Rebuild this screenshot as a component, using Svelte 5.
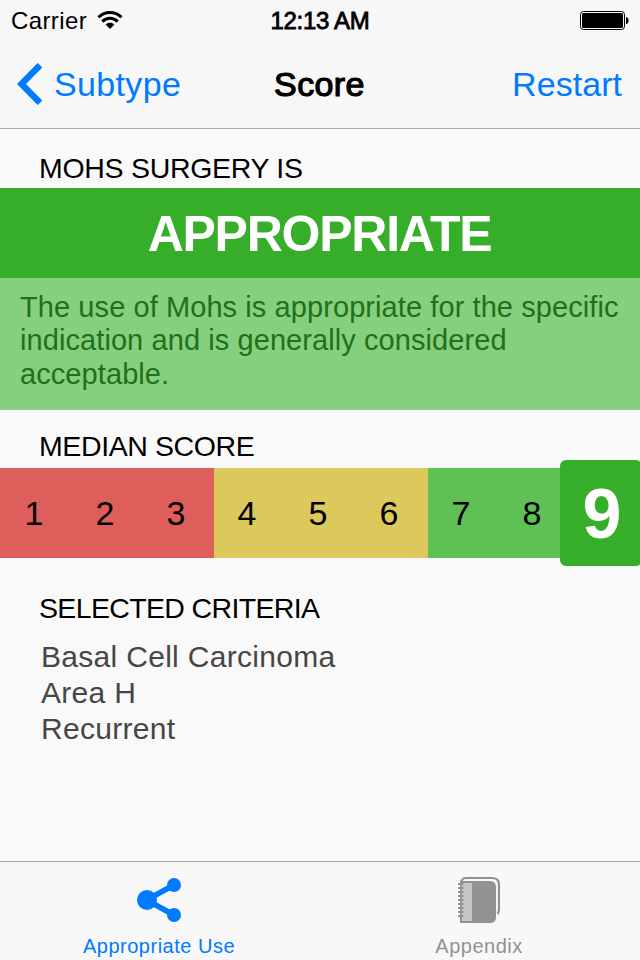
<script>
let verdict = 'APPROPRIATE';
let median = 9;

const bands = [
  { name: 'low', scores: [1, 2, 3] },
  { name: 'mid', scores: [4, 5, 6] },
  { name: 'high', scores: [7, 8, 9] },
];

const description = [
  'The use of Mohs is appropriate for the specific',
  'indication and is generally considered',
  'acceptable.',
];

const criteria = ['Basal Cell Carcinoma', 'Area H', 'Recurrent'];

// y positions of the notebook's spiral rings
const rings = [9, 13, 17, 21, 25, 29, 33, 37, 41];
</script>

<style>
  :global(body) {
    background: #f9f9f9;
  }

  .screen {
    display: flex;
    flex-direction: column;
    width: 640px;
    height: 960px;
    overflow: hidden;
    background: #f9f9f9;
    color: #000;
    font-family: "Liberation Sans", Arial, sans-serif;
    white-space: nowrap;
  }

  header {
    height: 128px;
    background: #f7f7f7;
    border-bottom: 1px solid #acacac;
  }

  .status {
    display: grid;
    grid-template-columns: 1fr auto 1fr;
    align-items: center;
    height: 40px;
    padding: 0 11px;
    font-size: 24px;
  }

  .carrier {
    display: flex;
    align-items: center;
    gap: 10px;
    letter-spacing: 0.4px;
  }

  .carrier span {
    padding-top: 2px;
  }

  .time {
    padding-top: 2px;
    letter-spacing: -0.3px;
    -webkit-text-stroke: 0.8px #000;
  }

  .battery {
    justify-self: end;
  }

  nav {
    display: grid;
    grid-template-columns: 1fr auto 1fr;
    align-items: center;
    height: 88px;
    padding: 0 18px 0 17px;
    font-size: 34px;
  }

  .back,
  .restart {
    color: #007aff;
  }

  .back {
    display: flex;
    align-items: center;
    gap: 11px;
    letter-spacing: 0.35px;
  }

  .restart {
    justify-self: end;
    letter-spacing: 0.05px;
  }

  h1 {
    margin: 0;
    font-size: 34px;
    font-weight: normal;
    letter-spacing: 0.4px;
    -webkit-text-stroke: 1.2px #000;
  }

  main {
    flex: 1;
  }

  h2 {
    margin: 0;
    padding-left: 39px;
    font-size: 28.5px;
    font-weight: normal;
    line-height: 32px;
    letter-spacing: -0.3px;
  }

  .verdict-title {
    padding-top: 23px;
    height: 36px;
  }

  .verdict {
    height: 90px;
    background: #37ae2a;
    color: #fff;
    font-size: 50px;
    font-weight: bold;
    line-height: 92px;
    letter-spacing: -1.25px;
    text-indent: -1px;
    text-align: center;
  }

  .description {
    box-sizing: border-box;
    height: 132px;
    padding: 12.5px 20px 0;
    background: #86cf7e;
    color: #21701a;
    font-size: 29px;
    line-height: 33.5px;
    letter-spacing: 0.08px;
  }

  .median-title {
    padding-top: 20px;
    height: 38px;
    letter-spacing: -0.4px;
  }

  .scale {
    display: flex;
    height: 90px;
  }

  .band {
    display: flex;
    flex: 0 0 214px;
  }

  .low {
    background: #de5e5b;
  }

  .mid {
    background: #ddc95b;
  }

  .high {
    background: #5fc055;
  }

  .score {
    box-sizing: border-box;
    flex: 0 0 71px;
    padding-right: 3px;
    font-size: 34px;
    line-height: 91px;
    text-align: center;
  }

  .mid .score,
  .high .score {
    padding-right: 5px;
  }

  .high .score.selected {
    flex: 0 0 82px;
    height: 106px;
    margin: -8px 0 0 -10px;
    padding: 0 0 0 2px;
    border-radius: 6px;
    background: #37ae2a;
    color: #fff;
    font-size: 70px;
    font-weight: bold;
    line-height: 108px;
  }

  .criteria-title {
    padding-top: 34px;
    height: 39px;
    letter-spacing: -0.65px;
  }

  ul {
    margin: 0;
    padding: 8px 0 0 41px;
    list-style: none;
    color: #464646;
    font-size: 30px;
    line-height: 36px;
    letter-spacing: 0.3px;
  }

  footer {
    display: flex;
    box-sizing: border-box;
    height: 99px;
    border-top: 1px solid #acacac;
    background: #f8f8f8;
  }

  .tab {
    display: flex;
    flex: 1;
    flex-direction: column;
    align-items: center;
    padding-right: 2px;
    color: #929292;
    font-size: 20px;
    letter-spacing: 0.5px;
  }

  .tab svg {
    margin-top: 13px;
  }

  .tab span {
    margin-top: 11px;
    line-height: 24px;
  }

  .tab.active {
    color: #007aff;
  }
</style>

<div class="screen">
  <header>
    <div class="status">
      <div class="carrier">
        <span>Carrier</span>
        <svg width="26" height="20" viewBox="0 0 26 20">
          <g fill="none" stroke="#000" stroke-width="3">
            <path d="M1.500 7.200C8 .8 18 .8 24.500 7.200"/>
            <path d="M5.300 11.600C9.800 7.200 16.200 7.200 20.700 11.600"/>
          </g>
          <path d="M8.600 14.600C11.200 12.200 14.800 12.200 17.400 14.600L13 19z"/>
        </svg>
      </div>
      <div class="time">12:13 AM</div>
      <svg class="battery" width="49" height="20" viewBox="0 0 49 20">
        <rect x=".5" y="1.500" width="44" height="18" rx="3" fill="none" stroke="#000"/>
        <rect x="2" y="3" width="41" height="15" rx="1.500"/>
        <path d="M46 7c3.500 .2 3.500 6.800 0 7z"/>
      </svg>
    </div>
    <nav>
      <div class="back">
        <svg width="26" height="42" viewBox="0 0 26 42">
          <path d="M23 2.200L4.500 21L23 39.800" fill="none" stroke="#007aff" stroke-width="6.400"/>
        </svg>
        <span>Subtype</span>
      </div>
      <h1>Score</h1>
      <div class="restart">Restart</div>
    </nav>
  </header>

  <main>
    <h2 class="verdict-title">MOHS SURGERY IS</h2>
    <div class="verdict">{verdict}</div>
    <div class="description">
      {#each description as line}
        <div>{line}</div>
      {/each}
    </div>

    <h2 class="median-title">MEDIAN SCORE</h2>
    <div class="scale">
      {#each bands as band}
        <div class="band {band.name}">
          {#each band.scores as score}
            <div class="score" class:selected={score === median}>{score}</div>
          {/each}
        </div>
      {/each}
    </div>

    <h2 class="criteria-title">SELECTED CRITERIA</h2>
    <ul>
      {#each criteria as item}
        <li>{item}</li>
      {/each}
    </ul>
  </main>

  <footer>
    <div class="tab active">
      <svg width="46" height="48" viewBox="0 0 46 48">
        <path d="M38 10L10.500 25L38 40" fill="none" stroke="currentColor" stroke-width="5.600"/>
        <g fill="currentColor">
          <circle cx="11" cy="25" r="10"/>
          <circle cx="38" cy="10" r="7"/>
          <circle cx="38" cy="40" r="7"/>
        </g>
      </svg>
      <span>Appropriate Use</span>
    </div>
    <div class="tab">
      <svg width="42" height="48" viewBox="0 0 42 48">
        <path d="M3 8C3.500 4.500 5 3 8 3H34Q41 3 41 10V34Q41 37 39.500 39" fill="none" stroke="currentColor" stroke-width="2.200"/>
        <path d="M2 6H32Q38 6 38 12V42Q38 48 32 48H2z" fill="currentColor"/>
        <path d="M4 8H14V46H4z" fill="#c6c6c6"/>
        {#each rings as y}
          <path d="M0 {y}H5.500" stroke="currentColor" stroke-width="2"/>
        {/each}
      </svg>
      <span>Appendix</span>
    </div>
  </footer>
</div>
